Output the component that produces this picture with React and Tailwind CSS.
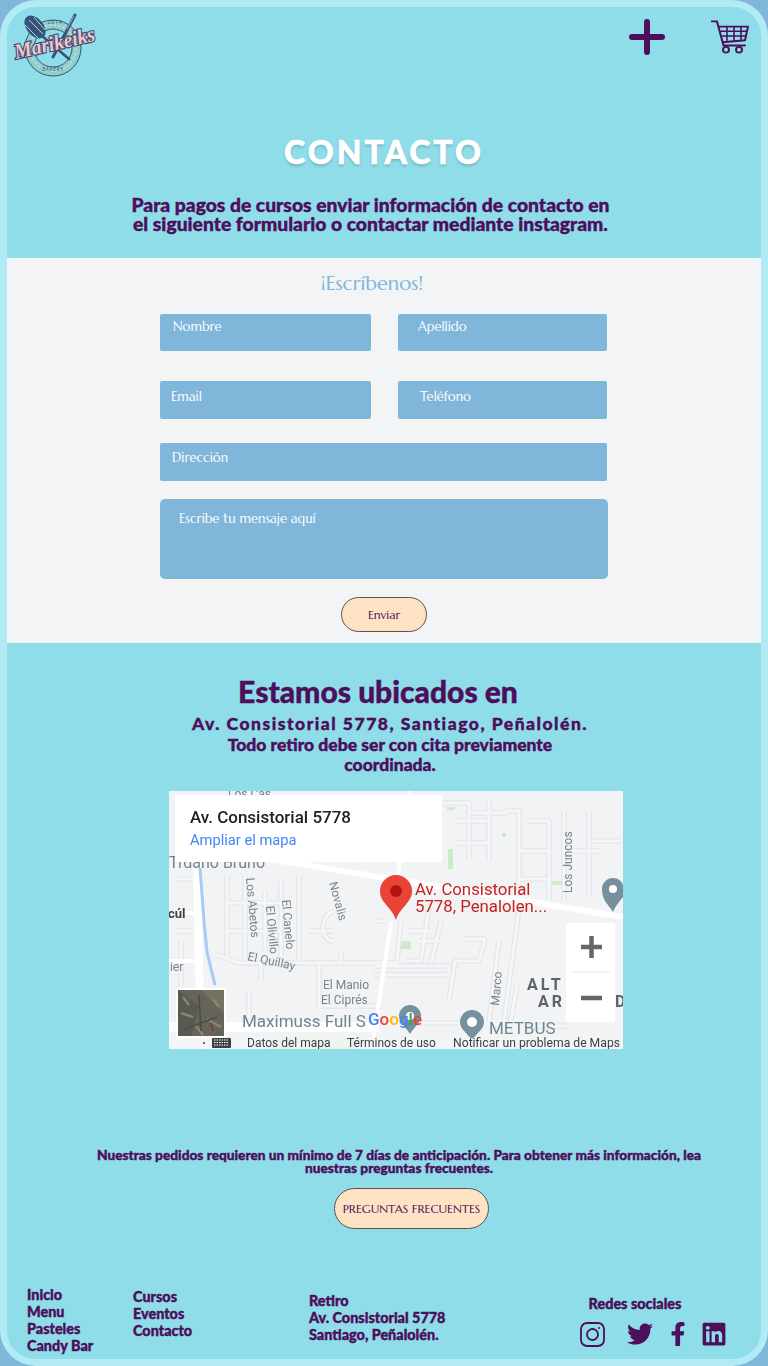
import React from 'react';
import { FaTwitter, FaFacebookF, FaLinkedin } from 'react-icons/fa';

const heading = "font-['Lato','Noto_Sans',sans-serif] font-black text-[#4d0e5c] [-webkit-text-stroke:0.4px_#4d0e5c]";
const serif = "font-['Marcellus','Lato','Noto_Sans',sans-serif]";

const Logo = () => (
  <svg viewBox="0 0 90 72" className="block w-[90px] h-[72px] overflow-visible">
    <circle cx="46" cy="41" r="28" fill="#8fcfcc" stroke="#3a5277" strokeWidth="1" />
    <circle cx="46" cy="41" r="19" fill="#8fdde9" stroke="#3a5277" strokeWidth="1" />
    <circle cx="46" cy="41" r="23" fill="none" stroke="#e9f7f7" strokeWidth="0.7" strokeDasharray="3 1.500" />
    <text x="48" y="17" textAnchor="middle" fontFamily="Roboto" fontSize="5" letterSpacing="1" fill="#3a5277">2014</text>
    <text x="46" y="64" textAnchor="middle" fontFamily="Roboto" fontSize="4.600" letterSpacing="0.800" fill="#3a5277">BAKERY</text>
    <path d="M34 28 L62 52" stroke="#3a5277" strokeWidth="2.600" strokeLinecap="round" />
    <path d="M68 8 L46 50" stroke="#3a5277" strokeWidth="3" strokeLinecap="round" />
    <path d="M67 9 L60 22" stroke="#8fb7d8" strokeWidth="1" />
    <ellipse cx="28" cy="20" rx="8.500" ry="13" transform="rotate(-40 28 20)" fill="#3a5277" />
    <path d="M22 13 L36 27 M27 10 L38 23 M18 18 L31 31" stroke="#8fdde9" strokeWidth="1" />
    <text
      x="9"
      y="52"
      transform="rotate(-13 9 52)"
      fontFamily="Liberation Serif"
      fontStyle="italic"
      fontWeight="700"
      fontSize="21"
      textLength="82"
      lengthAdjust="spacingAndGlyphs"
      fill="#f9c3cb"
      stroke="#3a4f74"
      strokeWidth="2.400"
      paintOrder="stroke"
    >
      Marikeiks
    </text>
  </svg>
);

const Cart = () => (
  <svg viewBox="0 0 38 36" preserveAspectRatio="none" className="block w-[38px] h-[34px]" fill="none" stroke="#4d0e5c">
    <path d="M0.500 1.500 H6 L12.500 27 H34" strokeWidth="2" strokeLinecap="round" strokeLinejoin="round" />
    <path d="M8 7 H37 L34 21.500 L11.500 23.500" strokeWidth="2" strokeLinejoin="round" />
    <path d="M9 12 H36 M10.500 17 H35 M16 7 V22 M23 7 V22 M30 7 V21" strokeWidth="1.600" />
    <circle cx="15" cy="31.500" r="3" strokeWidth="2" />
    <circle cx="28" cy="31.500" r="3" strokeWidth="2" />
  </svg>
);

const Plus = () => (
  <svg viewBox="0 0 36 36" className="block w-9 h-9" stroke="#4d0e5c" strokeWidth="6" strokeLinecap="round">
    <path d="M18 3 V33 M3 18 H33" />
  </svg>
);

const InstagramIcon = () => (
  <svg viewBox="0 0 25 25" className="block w-[25px] h-[25px]" fill="none" stroke="#4d0e5c" strokeWidth="1.800">
    <rect x="1" y="1" width="23" height="23" rx="6" />
    <circle cx="12.500" cy="12.500" r="5.500" />
    <circle cx="19" cy="6" r="1" fill="#4d0e5c" stroke="none" />
  </svg>
);

const Field = ({ placeholder, pad, className = '' }) => (
  <input
    placeholder={placeholder}
    className={`rounded-[2px] bg-[#7fb6da] text-[13px] text-white placeholder:text-white outline-none ${serif} ${pad} ${className}`}
  />
);

const outlined = [
  'M58 84 V170 M58 112 H120 M58 140 H112 M76 84 V170',
  'M96 100 V160 M112 90 V170 M130 84 V170 M140 140 H165 M165 120 C150 125 150 150 165 150',
  'M48 164 L70 172 H230 M92 172 V190 M80 200 V225 M150 172 V215 H214 M172 172 V160',
  'M236 40 C230 56 232 66 240 68 M262 12 H300 V68 M300 22 H338 M288 30 H318 M288 52 H320 M320 10 V70',
  'M335 20 L350 20 V100 M358 30 H380 V110 M348 60 H382 M348 88 H382 M395 20 V110 M395 60 H430 M420 20 V105 M422 50 H452',
  'M205 130 H215 M232 130 L228 170 M240 140 H262 M260 116 L252 170 H238 M250 150 H272',
  'M272 130 L262 172 M294 148 H316 L310 170 H286 L280 210 M205 175 H280 V184 H205',
  'M330 150 L320 230 M350 118 L335 230 M348 195 L340 240 M8 88 H22 M8 140 H22 M8 200 H22 M12 150 V195',
  'M364 235 H400 M240 232 H290',
];

const MapView = () => (
  <svg viewBox="0 0 454 258" className="block w-[454px] h-[258px] blur-[0.4px]" fontFamily="Roboto, sans-serif">
    <rect width="454" height="258" fill="#f1f3f4" />
    <g fill="#cdeacb">
      <path d="M105 247 H190 L184 258 H100 Z" />
      <rect x="278" y="16" width="8" height="3" />
      <rect x="333" y="42" width="4" height="4" />
      <rect x="279" y="58" width="5" height="20" />
      <rect x="232" y="150" width="10" height="8" />
      <rect x="378" y="90" width="18" height="4" />
    </g>
    <g fill="none" strokeLinejoin="round">
      {outlined.map((d, i) => (
        <path key={i} d={d} stroke="#e4e6e9" strokeWidth="5.500" />
      ))}
      {outlined.map((d, i) => (
        <path key={i} d={d} stroke="#f5f6f7" strokeWidth="3" />
      ))}
      <path d="M100 68 L241 91 L454 126" stroke="#ffffff" strokeWidth="6" />
      <path d="M0 122 H28 M0 170 H30" stroke="#ffffff" strokeWidth="4" />
      <path d="M28 70 L30 180 L34 258" stroke="#ffffff" strokeWidth="8" />
      <path d="M0 236 H210" stroke="#ffffff" strokeWidth="10" />
      <path d="M222 131 L204 250" stroke="#ffffff" strokeWidth="4" />
      <path d="M241 0 L228 91" stroke="#ffffff" strokeWidth="4" />
      <path d="M31 77 L35 130 L38 161 L46 194" stroke="#a9c9f7" strokeWidth="3" />
    </g>
    <g fill="#7b8289" fontSize="12">
      <text x="59" y="7" fontSize="12">Los Cas</text>
      <text x="0" y="77" fontSize="16">Trdano Bruno</text>
      <text x="-1" y="127" fontSize="13" fontWeight="700" fill="#3c4043">cúl</text>
      <text x="-2" y="180" fontSize="12">lier</text>
      <text transform="translate(77 87) rotate(85)">Los Abetos</text>
      <text transform="translate(97 115) rotate(85)">El Olivillo</text>
      <text transform="translate(113 109) rotate(85)">El Canelo</text>
      <text transform="translate(160 92) rotate(75)">Novalis</text>
      <text transform="translate(78 169) rotate(12)">El Quillay</text>
      <text x="154" y="198">El Manio</text>
      <text x="152" y="213">El Ciprés</text>
      <text transform="translate(403 102) rotate(-90)">Los Juncos</text>
      <text transform="translate(330 215) rotate(-85)">Marco</text>
      <text x="358" y="199" fontSize="16" fontWeight="700" letterSpacing="3" fill="#5f6368">ALT</text>
      <text x="369" y="216" fontSize="16" fontWeight="700" letterSpacing="3" fill="#5f6368">ARI</text>
      <text x="446" y="216" fontSize="16" fontWeight="700" fill="#5f6368">D</text>
    </g>
    <text x="73" y="236" fontSize="17" fill="#6d8592">Maximuss Full S</text>
    <text x="320" y="243" fontSize="17" fill="#6d8592">METBUS</text>
    <path d="M241 214 a11 11 0 0 1 11 11 c0 7 -7 11 -11 18 c-4 -7 -11 -11 -11 -18 a11 11 0 0 1 11 -11 Z" fill="#76909e" />
    <circle cx="241" cy="225" r="4" fill="#fff" />
    <path d="M303 219 a12 12 0 0 1 12 12 c0 7 -7 11 -12 18 c-5 -7 -12 -11 -12 -18 a12 12 0 0 1 12 -12 Z" fill="#76909e" />
    <circle cx="303" cy="231" r="5" fill="#fff" />
    <path d="M444 87 a11 11 0 0 1 10 7 v12 c-3 4 -7 8 -10 15 c-4 -7 -11 -11 -11 -23 a11 11 0 0 1 11 -11 Z" fill="#76909e" />
    <circle cx="444" cy="98" r="4" fill="#fff" />
    <path d="M227 84 a16 16 0 0 1 16 16 c0 12 -12 16 -16 29 c-4 -13 -16 -17 -16 -29 a16 16 0 0 1 16 -16 Z" fill="#ea4335" />
    <circle cx="227" cy="100" r="6" fill="#b31412" />
    <text x="246" y="104" fontSize="16.800" fill="#c5221f">Av. Consistorial</text>
    <text x="246" y="121" fontSize="16.800" fill="#c5221f">5778, Penalolen...</text>
    <rect x="6" y="4" width="267" height="67" rx="1" fill="#fff" />
    <text x="21" y="32" fontSize="17" fontWeight="500" fill="#202124">Av. Consistorial 5778</text>
    <text x="21" y="54" fontSize="14.700" fill="#4285f4">Ampliar el mapa</text>
    <rect x="397" y="132" width="49" height="99" rx="2" fill="#fff" />
    <path d="M412 156 H433 M422.500 145 V167 M412 207 H433" stroke="#666" strokeWidth="4.500" />
    <path d="M402 181 H441" stroke="#e6e6e6" strokeWidth="1" />
    <rect x="0" y="247" width="454" height="11" fill="#f5f5f5" opacity="0.8" />
    <rect x="7" y="197" width="50" height="50" rx="1" fill="#ffffff" />
    <rect x="9" y="199" width="46" height="46" fill="#66645a" />
    <path d="M9 199 L30 215 L22 245 H9 Z" fill="#565a50" />
    <path d="M32 199 L55 222 V199 Z" fill="#77725f" />
    <path d="M14 206 L20 214 M12 222 L24 226 M38 228 L52 236 M44 208 L50 216 M26 234 L34 244" stroke="#8a8472" strokeWidth="2.500" />
    <path d="M30 204 L32 240 M16 238 L48 226" stroke="#4a4b44" strokeWidth="1.500" />
    <path d="M42 232 L44 240" stroke="#7a3a30" strokeWidth="1.500" />
    <text y="234" fontSize="17" fontWeight="500" fontFamily="Roboto, sans-serif">
      <tspan x="199" fill="#4285f4">G</tspan>
      <tspan fill="#ea4335">o</tspan>
      <tspan fill="#fbbc05">o</tspan>
      <tspan fill="#4285f4">g</tspan>
      <tspan fill="#34a853">l</tspan>
      <tspan fill="#ea4335">e</tspan>
    </text>
    <g fill="#3c4043" fontSize="12">
      <text x="78" y="256">Datos del mapa</text>
      <text x="178" y="256">Términos de uso</text>
      <text x="284" y="256" textLength="167" lengthAdjust="spacingAndGlyphs">Notificar un problema de Maps</text>
    </g>
    <rect x="43" y="247" width="19" height="10" rx="1" fill="#3c4043" />
    <path d="M45 249 H60 M45 251.500 H60 M45 254 H60" stroke="#fff" strokeWidth="1" strokeDasharray="1.500 1" />
    <circle cx="35" cy="252" r="1" fill="#3c4043" />
  </svg>
);

const Footer = () => (
  <footer className={`flex items-start pl-[20px] text-[14.400px] leading-[17px] ${heading}`}>
    <ul className="w-[106px]">
      <li>Inicio</li>
      <li>Menu</li>
      <li>Pasteles</li>
      <li>Candy Bar</li>
    </ul>
    <ul className="w-[176px] pt-[2px]">
      <li>Cursos</li>
      <li>Eventos</li>
      <li>Contacto</li>
    </ul>
    <ul className="w-[240px] pt-[6px]">
      <li>Retiro</li>
      <li>Av. Consistorial 5778</li>
      <li>Santiago, Peñalolén.</li>
    </ul>
    <div className="pt-[9px]">
      <p className="w-[172px] text-center">Redes sociales</p>
      <div className="ml-[31px] mt-[9px] flex items-center text-[#4d0e5c]">
        <InstagramIcon />
        <FaTwitter size={26} className="ml-[22px]" />
        <FaFacebookF size={24} className="ml-[12.500px]" />
        <FaLinkedin size={26} className="ml-[11px]" />
      </div>
    </div>
  </footer>
);

export default function App() {
  return (
    <div className="w-[768px] h-[1366px] overflow-hidden bg-[#7fb6da]">
      <div className="h-full rounded-[36px] bg-[#b2ebf5] p-[7px]">
        <div className="h-full overflow-hidden rounded-[28px] bg-[#8fdde9]">
          <header className="flex h-[251px] flex-col">
            <div className="flex h-[72px] items-start justify-between">
              <Logo />
              <div className="flex items-center gap-[46px] pr-[12px] pt-[12px]">
                <Plus />
                <Cart />
              </div>
            </div>
            <h1 className="mt-[53px] text-center text-[32px] leading-[40px] tracking-[3px] font-['Lato',sans-serif] font-black text-white [-webkit-text-stroke:0.6px_#fff] [text-shadow:0_2px_3px_rgba(0,0,0,0.2)]">
              CONTACTO
            </h1>
            <p className={`ml-[-27px] mt-[23px] text-center text-[19.300px] leading-[19px] ${heading}`}>
              Para pagos de cursos enviar información de contacto en
              <br />
              el siguiente formulario o contactar mediante instagram.
            </p>
          </header>

          <section className="h-[385px] bg-[#f2f4f6]">
            <h2 className={`ml-[-24px] pt-[12px] text-center text-[20px] leading-[28px] text-[#7fb6da] ${serif}`}>¡Escríbenos!</h2>
            <form className="ml-[153px] mt-[16px] w-[448px]">
              <div className="grid grid-cols-[211px_209px] gap-x-[27px] gap-y-[30px]">
                <Field placeholder="Nombre" pad="h-[37px] pb-[12px] pl-[13px]" />
                <Field placeholder="Apellido" pad="h-[37px] pb-[12px] pl-[20px]" />
                <Field placeholder="Email" pad="h-[38px] pb-[8px] pl-[11px]" />
                <Field placeholder="Teléfono" pad="h-[38px] pb-[8px] pl-[22px]" />
              </div>
              <Field placeholder="Dirección" pad="h-[38px] pb-[10px] pl-[12px]" className="mt-[24px] block w-[447px]" />
              <textarea
                placeholder="Escribe tu mensaje aquí"
                className={`mt-[18px] block h-[80px] w-[448px] resize-none rounded-[5px] bg-[#7fb6da] pl-[19px] pt-[10px] text-[13px] text-white placeholder:text-white outline-none ${serif}`}
              />
              <button
                type="button"
                className={`mx-auto mt-[18px] block h-[35px] w-[86px] rounded-full border border-[#5b5050] bg-[#fde2c3] text-[12px] text-[#4d0e5c] ${serif}`}
              >
                Enviar
              </button>
            </form>
          </section>

          <section className="flex h-[716px] flex-col">
            <h2 className={`ml-[-12px] mt-[30px] text-center text-[30px] leading-[36px] ${heading}`}>Estamos ubicados en</h2>
            <p className={`ml-[12px] mt-[5px] text-center text-[17.500px] leading-[20.500px] ${heading}`}>
              <span className="tracking-[1.500px]">Av. Consistorial 5778, Santiago, Peñalolén.</span>
              <br />
              Todo retiro debe ser con cita previamente
              <br />
              coordinada.
            </p>
            <div className="ml-[162px] mt-[15.500px] w-[454px]">
              <MapView />
            </div>
            <p className={`ml-[30px] mt-[99px] text-center text-[13.700px] leading-[13px] ${heading}`}>
              Nuestras pedidos requieren un mínimo de 7 días de anticipación. Para obtener más información, lea
              <br />
              nuestras preguntas frecuentes.
            </p>
            <button
              type="button"
              className={`ml-[327px] mt-[14px] h-[41px] w-[155px] rounded-full border border-[#5b5050] bg-[#fde2c3] text-[12px] text-[#4d0e5c] ${serif}`}
            >
              PREGUNTAS FRECUENTES
            </button>
            <div className="mt-[57px]">
              <Footer />
            </div>
          </section>
        </div>
      </div>
    </div>
  );
}
